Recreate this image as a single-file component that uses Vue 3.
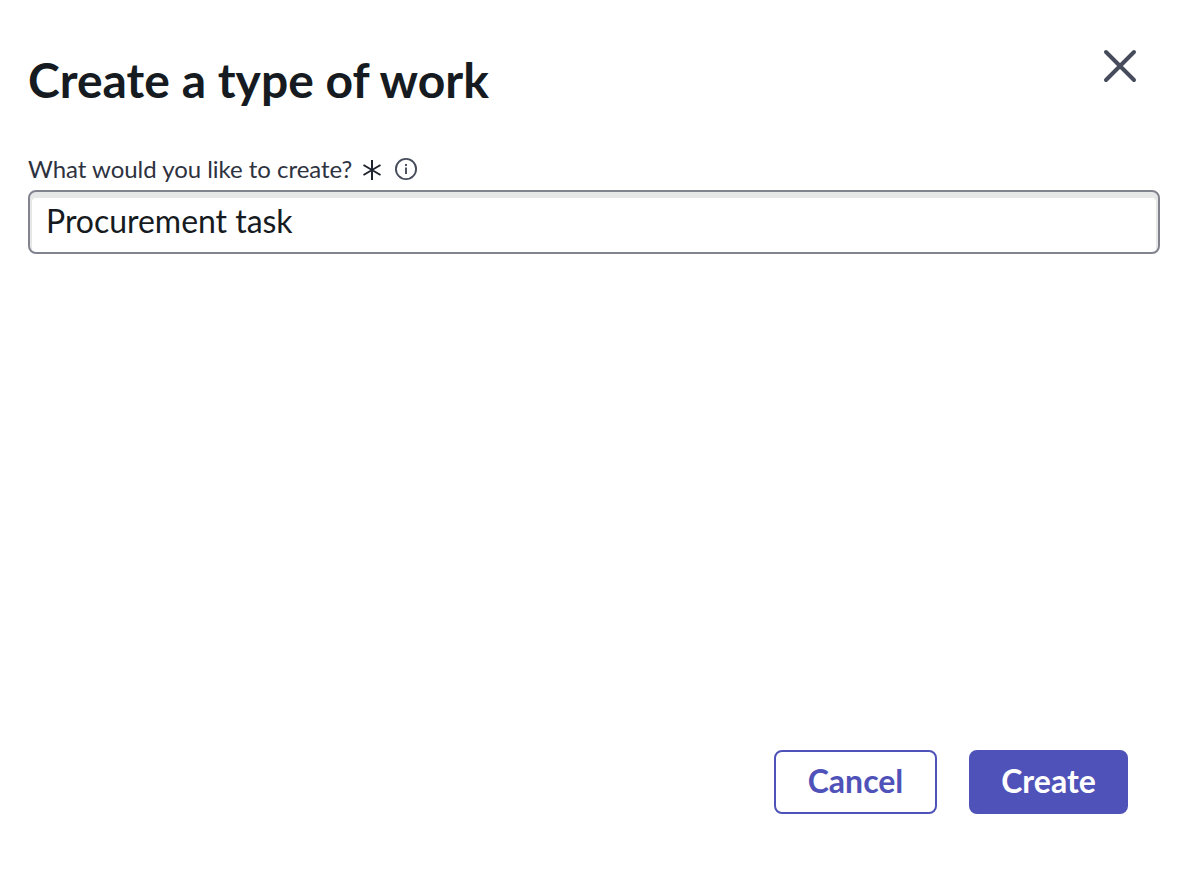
<template>
  <div class="modal" role="dialog" aria-labelledby="modal-title">
    <header class="head">
      <h1 id="modal-title" class="title">Create a type of work</h1>
      <button class="close" type="button" aria-label="Close">
        <svg width="36" height="36" viewBox="0 0 36 36"><path d="M4 4 32 32M32 4 4 32" /></svg>
      </button>
    </header>
    <div class="field">
      <div class="label-row">
        <label class="label" for="work-name">What would you like to create?</label>
        <svg class="required" width="20" height="22" viewBox="0 0 20 22"><path d="M10 2V22M1.5 7 18.5 17M18.5 7 1.5 17" /></svg>
        <svg class="info" width="24" height="24" viewBox="0 0 24 24"><circle cx="12" cy="12" r="10.1" /><path d="M12 10.5V17M12 7V9" /></svg>
      </div>
      <input id="work-name" v-model="name" class="input" type="text" />
    </div>
    <footer class="foot">
      <button class="btn cancel" type="button">Cancel</button>
      <button class="btn create" type="button">Create</button>
    </footer>
  </div>
</template>
<script setup>
import { ref } from 'vue'
const name = ref('Procurement task')
</script>
<style>
body { margin: 0; background: #fff; }
</style>
<style scoped>
.modal { box-sizing: border-box; height: 886px; padding: 46px 30px 72px 28px; display: flex; flex-direction: column; font-family: Lato, sans-serif; color: #161b21; }
.head { display: flex; justify-content: space-between; align-items: flex-start; height: 105px; padding-right: 20px; }
.title { margin: 5px 0 0; font-size: 48px; line-height: 58px; font-weight: 700; letter-spacing: 0.02px; white-space: nowrap; }
.close { display: block; width: 40px; height: 40px; padding: 2px; border: 0; background: none; }
.close svg { display: block; fill: none; stroke: #464c5b; stroke-width: 4; stroke-linecap: round; }
.field { flex: 1; }
.label-row { display: flex; align-items: center; height: 36px; padding-bottom: 3px; }
.label { font-size: 24px; line-height: 32px; letter-spacing: -0.03px; color: #2e3240; white-space: nowrap; }
.required { margin-left: 10px; fill: none; stroke: #20242f; stroke-width: 2; }
.info { margin-left: 12px; fill: none; stroke: #464c5b; stroke-width: 1.9; }
.input { display: block; box-sizing: border-box; width: 100%; height: 64px; padding: 0 16px 4px; border: 2px solid #81838e; border-radius: 8px; outline: 0; box-shadow: inset 0 4px 0 2px #e6e8e8; background: #fff; font: 400 32px Lato, sans-serif; letter-spacing: -0.03px; color: #161b21; }
.foot { display: flex; justify-content: flex-end; gap: 32px; padding-right: 32px; }
.btn { box-sizing: border-box; height: 64px; padding: 0 0 3px; border: 2px solid #4f52b8; border-radius: 8px; font: 700 32px Lato, sans-serif; }
.cancel { width: 163px; background: #fff; color: #4f52b8; }
.create { width: 159px; background: #4f52b8; color: #fff; }
</style>
